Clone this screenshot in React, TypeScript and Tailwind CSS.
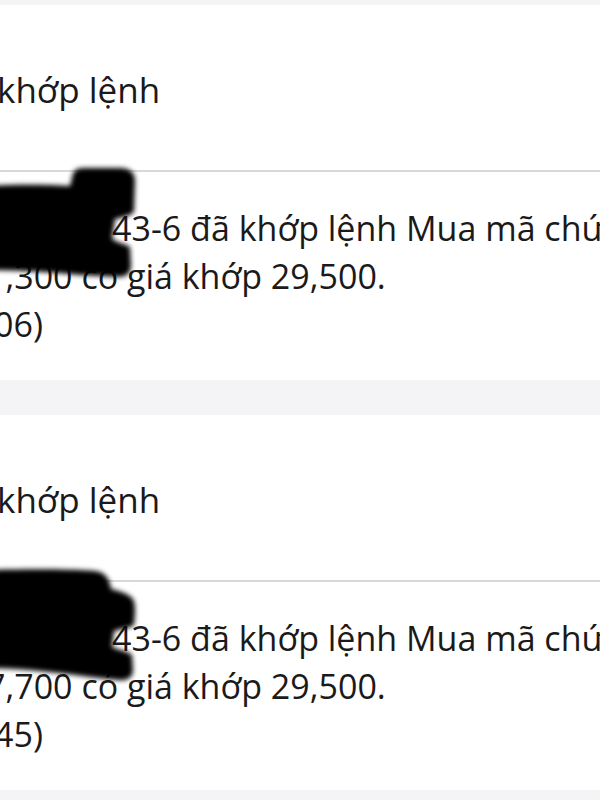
import React from "react";

type CardProps = {
  qty: string;
  tail: string;
  blob: "a" | "b";
};

function Blob({ kind }: { kind: "a" | "b" }) {
  if (kind === "a") {
    return (
      <svg
        className="absolute left-0 top-[150px]"
        width="160"
        height="150"
        viewBox="0 0 160 150"
      >
        <defs>
          <filter id="blurA" x="-20%" y="-20%" width="140%" height="140%">
            <feGaussianBlur stdDeviation="2.5" />
          </filter>
        </defs>
        <path
          d="M -10 31 C 20 29, 50 30, 70 31 L 72 23 C 73 16, 76 13, 84 13 L 120 13 C 130 13, 135 18, 135 26 L 134 56 C 133 60, 124 62, 115 64 L 112 84 C 118 88, 126 89, 130 92 L 131 110 C 131 118, 127 122, 118 122 L 80 120 C 50 117, 20 115, -10 115 Z"
          fill="#000"
          filter="url(#blurA)"
        />
      </svg>
    );
  }
  return (
    <svg
      className="absolute left-0 top-[140px]"
      width="160"
      height="150"
      viewBox="0 0 160 150"
    >
      <defs>
        <filter id="blurB" x="-20%" y="-20%" width="140%" height="140%">
          <feGaussianBlur stdDeviation="2.5" />
        </filter>
      </defs>
      <path
        d="M -10 15 C 30 14, 70 14, 95 16 C 105 17, 110 24, 111 34 C 118 36, 128 38, 133 44 C 136 50, 135 60, 134 70 C 130 73, 120 74, 114 76 L 112 92 C 118 95, 128 96, 132 100 L 133 115 C 133 122, 128 126, 118 125 L 90 122 C 60 118, 30 114, -10 113 Z"
        fill="#000"
        filter="url(#blurB)"
      />
    </svg>
  );
}

function Card({ qty, tail, blob }: CardProps) {
  return (
    <div className="relative h-[375px] shrink-0 overflow-hidden bg-white text-[#1a1a1a]">
      <div className="h-[165px] overflow-hidden pt-[67px]">
        <div className="ml-[-3px] whitespace-nowrap text-[35px] leading-none">
          khớp lệnh
        </div>
      </div>
      <div className="h-[2px] bg-[#d9d9d9]" />
      <div className="pt-[32px] text-[34px] leading-[48px]">
        <div className="ml-[112px] whitespace-nowrap">
          43-6 đã khớp lệnh Mua mã chứng khoán
        </div>
        <div className="ml-[-14px] whitespace-nowrap">
          {qty} có giá khớp 29,500.
        </div>
        <div className="ml-[-6px] whitespace-nowrap">{tail}</div>
      </div>
      <Blob kind={blob} />
    </div>
  );
}

export default function App() {
  return (
    <div
      className="flex h-[800px] w-[600px] flex-col gap-[35px] overflow-hidden bg-[#f4f4f7] pt-[5px]"
      style={{ fontFamily: '"Open Sans", "Noto Sans", sans-serif' }}
    >
      <Card qty="1,300" tail="06)" blob="a" />
      <Card qty="7,700" tail="45)" blob="b" />
    </div>
  );
}
